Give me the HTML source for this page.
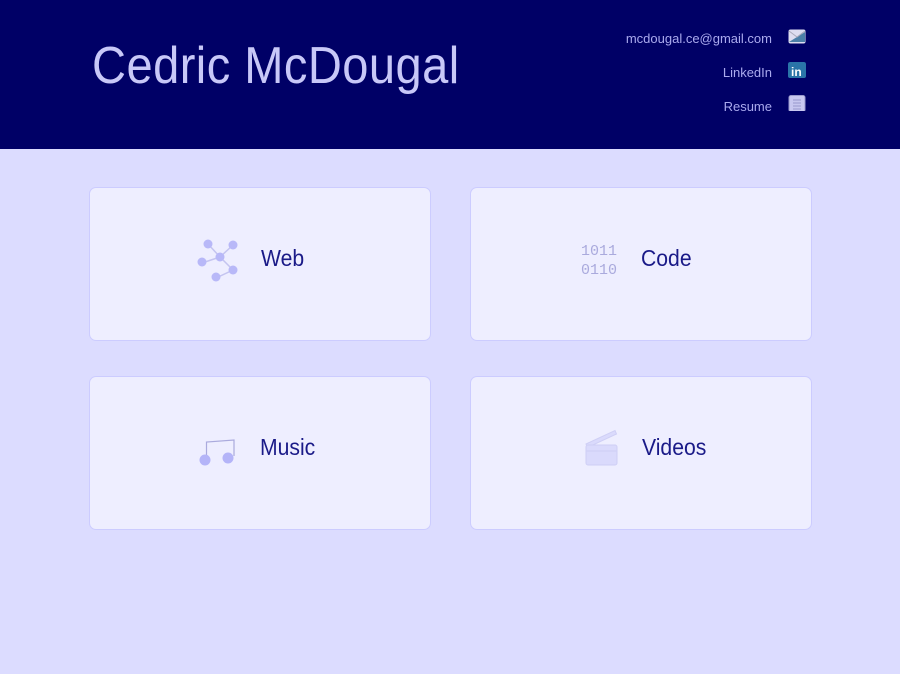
<!DOCTYPE html>
<html><head><style>
body{margin:0;width:900px;height:674px;background:#dcdcff;font-family:"Liberation Sans",sans-serif;position:relative;overflow:hidden}
.hd{position:absolute;left:0;top:0;width:900px;height:149px;background:#000066}
.title{position:absolute;left:92px;top:36px;font-size:52px;color:#c8c8f8;font-weight:normal;letter-spacing:0.5px;transform:scaleX(0.905);transform-origin:left}
.lk{position:absolute;right:128px;font-size:13px;color:#aaaaee;text-align:right}
.ic{position:absolute;left:788px;width:18px;height:16px;border-radius:2px}
.card{position:absolute;width:342px;height:154px;background:#eeeeff;border:1px solid #ccccff;border-radius:7px;box-sizing:border-box}
.lbl{position:absolute;font-size:23px;color:#1a1a88;transform:scaleX(0.92);transform-origin:left}
</style></head><body>
<div class="hd">
<div class="title">Cedric McDougal</div>
<div class="lk" style="top:31px">mcdougal.ce@gmail.com</div>
<div class="lk" style="top:65px">LinkedIn</div>
<div class="lk" style="top:99px">Resume</div>
<svg class="ic" style="top:29px" width="18" height="16"><rect x="0.5" y="0.5" width="17" height="14" rx="2" fill="#ddddf0"/><path d="M1 13L17 3V13Z" fill="#4b7fa8"/><path d="M1 2L9 8L17 2" stroke="#aab" fill="none"/></svg>
<svg class="ic" style="top:62px" width="18" height="18"><rect width="18" height="18" rx="2" fill="#2a74a8"/><text x="3" y="14" font-size="12" font-weight="bold" fill="#fff" font-family="Liberation Sans">in</text></svg>
<svg class="ic" style="top:95px" width="18" height="20"><rect x="1" y="0.5" width="16" height="19" rx="2" fill="#c8c8f0" stroke="#9999cc"/><path d="M5 5H13M5 8H13M5 11H13M5 14H13" stroke="#9999cc"/></svg>
</div>
<div class="card" style="left:89px;top:187px"></div>
<div class="card" style="left:470px;top:187px"></div>
<div class="card" style="left:89px;top:376px"></div>
<div class="card" style="left:470px;top:376px"></div>
<svg style="position:absolute;left:195px;top:236px" width="48" height="50"><g stroke="#c4c4f0" stroke-width="1.5" fill="none"><path d="M13 8L25 21L38 9M7 27L25 21L38 34L21 42"/></g><g fill="#b8b8f8"><circle cx="13" cy="8" r="4.5"/><circle cx="38" cy="9" r="4.5"/><circle cx="25" cy="21" r="4.5"/><circle cx="7" cy="26" r="4.5"/><circle cx="38" cy="34" r="4.5"/><circle cx="21" cy="41" r="4.5"/></g></svg>
<div class="lbl" style="left:261px;top:245px">Web</div>
<div style="position:absolute;left:581px;top:242px;font-family:'Liberation Mono',monospace;font-size:15px;line-height:19px;color:#aaaadd">1011<br>0110</div>
<div class="lbl" style="left:641px;top:245px">Code</div>
<svg style="position:absolute;left:196px;top:430px" width="40" height="40"><path d="M10.5 28V12L38 10V26" stroke="#aaaadd" fill="none" stroke-width="1.2"/><circle cx="9" cy="30" r="5.5" fill="#b4b4f8"/><circle cx="32" cy="28" r="5.5" fill="#b4b4f8"/></svg>
<div class="lbl" style="left:260px;top:434px">Music</div>
<svg style="position:absolute;left:583px;top:428px" width="36" height="40"><path d="M3 16L32 2.5L33.5 6L4.5 19.5Z" fill="#dadafc" stroke="#cfcff5"/><rect x="3" y="17" width="31" height="20" rx="2" fill="#dadafc" stroke="#cfcff5"/><path d="M3 23H34" stroke="#cfcff5"/></svg>
<div class="lbl" style="left:642px;top:434px">Videos</div>
</body></html>
